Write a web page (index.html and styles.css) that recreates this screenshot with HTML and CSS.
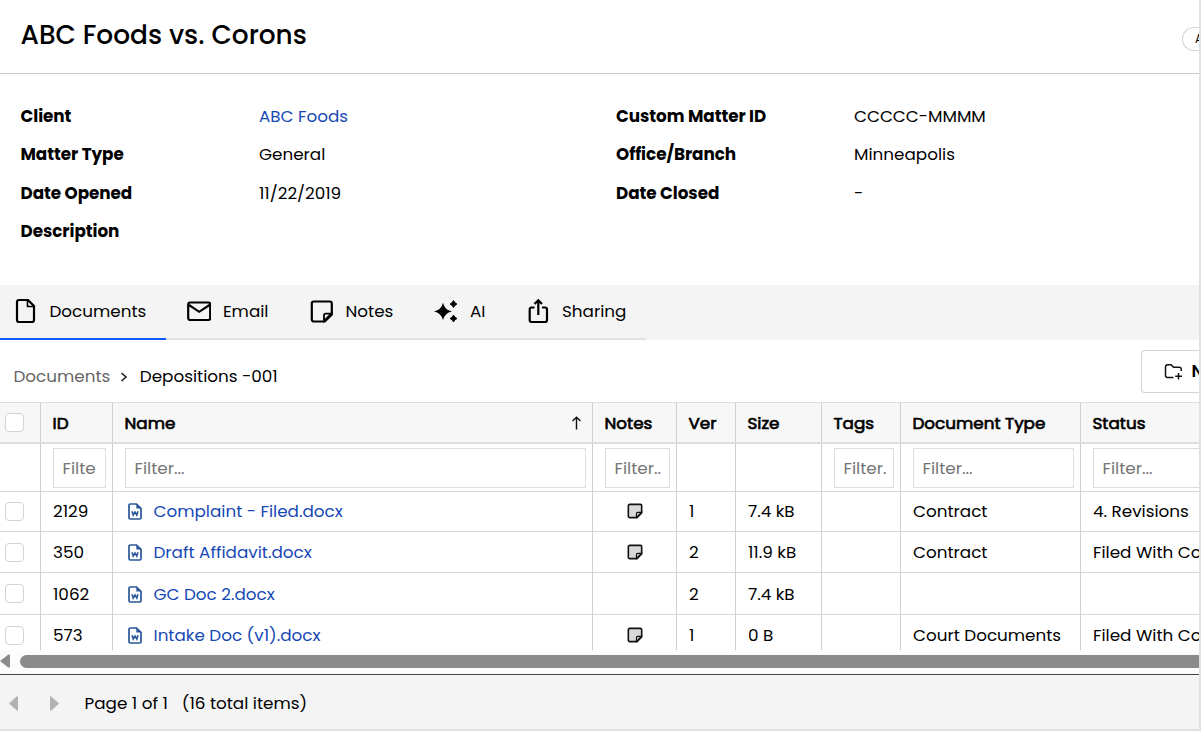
FILE: index.html
```html
<!DOCTYPE html>
<html lang="en">
<head>
<meta charset="utf-8">
<title>ABC Foods vs. Corons</title>
<link rel="stylesheet" href="styles.css">
</head>
<body>
<svg class="defs" width="0" height="0">
  <symbol id="word" viewBox="0 0 14 17"><path d="M2.200 1h6.300L13 5.300V14.800A1.200 1.200 0 0 1 11.800 16H2.200A1.200 1.200 0 0 1 1 14.800V2.200A1.200 1.200 0 0 1 2.200 1Z" fill="#fff" stroke="#2b579a" stroke-width="1.700"/><path d="M8.300 1v4.600H13Z" fill="#2b579a"/><path d="M4 8.200l1.200 3.800L7 9l1.800 3 1.200-3.800" fill="none" stroke="#2b579a" stroke-width="1.600"/></symbol>
  <symbol id="note" viewBox="0 0 24 24"><path d="M4 2H20A2 2 0 0 1 22 4V15L15 22H4A2 2 0 0 1 2 20V4A2 2 0 0 1 4 2Z"/><path d="M14.200 21.500V16A1.800 1.800 0 0 1 16 14.200H21.500L14.200 21.500Z" class="fold"/></symbol>
</svg>
<div class="app">
  <header class="top"><h1>ABC Foods vs. Corons</h1><span class="chip">A</span></header>
  <section class="info">
    <b>Client</b><a>ABC Foods</a><b>Custom Matter ID</b><span>CCCCC-MMMM</span>
    <b>Matter Type</b><span>General</span><b>Office/Branch</b><span>Minneapolis</span>
    <b>Date Opened</b><span>11/22/2019</span><b>Date Closed</b><span>-</span>
    <b>Description</b>
  </section>
  <nav class="tabs">
    <div class="tab t1"><svg viewBox="0 0 24 26"><path d="M5 2H14L20 8V22A2 2 0 0 1 18 24H5A2 2 0 0 1 3 22V4A2 2 0 0 1 5 2Z"/><path d="M13.500 2.500V8.500H19.500" stroke-width="1.600"/></svg><span>Documents</span></div>
    <div class="tab t2"><svg viewBox="0.500 0 24 26"><rect x="1.700" y="4.500" width="22" height="17.500" rx="2"/><path d="M2.500 7L12.700 13.800 23 7"/></svg><span>Email</span></div>
    <div class="tab t3"><svg viewBox="0.200 -1.500 24 26"><use href="#note" width="24" height="24"/></svg><span>Notes</span></div>
    <div class="tab t4"><svg viewBox="0 0 24 26"><g fill="#000" stroke="none"><path d="M9 4.800Q10.700 12 17.800 13.400 10.700 14.900 9 22 7.300 14.900 0 13.400 7.300 12 9 4.800Z"/><path d="M19.500 2.500Q20.600 5 23 6 20.600 7 19.500 9.500 18.400 7 16 6 18.400 5 19.500 2.500ZM19.500 17Q20.600 19.500 23 20.500 20.600 21.500 19.500 24 18.400 21.500 16 20.500 18.400 19.500 19.500 17Z" stroke="#000" stroke-width=".8"/></g></svg><span>AI</span></div>
    <div class="tab t5"><svg viewBox="0 0 24 26"><path d="M8.500 9.500H5.500A2 2 0 0 0 3.700 11.500V22A2 2 0 0 0 5.500 24H19A2 2 0 0 0 21 22V11.500A2 2 0 0 0 19 9.500H16M12.300 17V2.500M8.500 6L12.300 2.200 16 6"/></svg><span>Sharing</span></div>
  </nav>
  <div class="bar">
    <div class="crumbs"><span class="c1">Documents</span><svg width="8" height="10" viewBox="0 0 8 10"><path d="M1.500 1L6 5 1.500 9" fill="none" stroke="#222" stroke-width="1.600"/></svg><span>Depositions -001</span></div>
    <div class="newbtn"><svg width="20" height="18" viewBox="0 0 20 18"><path d="M9.500 14.500H3.500A2 2 0 0 1 1.500 12.500V3.800A2 2 0 0 1 3.500 1.800H7L9.500 4.300H15.500A1.700 1.700 0 0 1 17.200 6V8M14.500 10V16.500M11.200 13.300H18" fill="none" stroke="#111" stroke-width="1.500"/></svg><b>New</b></div>
  </div>
  <div class="grid">
    <div class="row head"><div><i class="cb"></i></div><div>ID</div><div class="nm"><span>Name</span><svg width="11" height="14" viewBox="0 0 11 14"><path d="M5.500 13.500V1.500M1.500 5L5.500 1.200 9.500 5" fill="none" stroke="#111" stroke-width="1.400"/></svg></div><div>Notes</div><div>Ver</div><div>Size</div><div>Tags</div><div>Document Type</div><div>Status</div></div>
    <div class="row filter"><div></div><div><p>Filte</p></div><div><p>Filter...</p></div><div><p>Filter..</p></div><div></div><div></div><div><p>Filter.</p></div><div><p>Filter...</p></div><div><p>Filter...</p></div></div>
    <div class="row r1"><div><i class="cb"></i></div><div>2129</div><div class="doc"><svg><use href="#word"/></svg><a>Complaint - Filed.docx</a></div><div class="n"><svg><use href="#note"/></svg></div><div>1</div><div>7.4 kB</div><div></div><div>Contract</div><div>4. Revisions</div></div>
    <div class="row r2"><div><i class="cb"></i></div><div>350</div><div class="doc"><svg><use href="#word"/></svg><a>Draft Affidavit.docx</a></div><div class="n"><svg><use href="#note"/></svg></div><div>2</div><div>11.9 kB</div><div></div><div>Contract</div><div>Filed With Court</div></div>
    <div class="row r3"><div><i class="cb"></i></div><div>1062</div><div class="doc"><svg><use href="#word"/></svg><a>GC Doc 2.docx</a></div><div></div><div>2</div><div>7.4 kB</div><div></div><div></div><div></div></div>
    <div class="row r4"><div><i class="cb"></i></div><div>573</div><div class="doc"><svg><use href="#word"/></svg><a>Intake Doc (v1).docx</a></div><div class="n"><svg><use href="#note"/></svg></div><div>1</div><div>0 B</div><div></div><div>Court Documents</div><div>Filed With Court</div></div>
  </div>
  <div class="scroll"><svg width="10" height="14" viewBox="0 0 10 14"><path d="M0 7L8 .8Q10 0 10 1.500V12.500Q10 14 8 13.200Z" fill="#8b8b8b"/></svg><i></i></div>
  <footer><svg width="9" height="15" viewBox="0 0 9 15"><path d="M0 7.500L8 .3Q9 0 9 1V14Q9 15 8 14.700Z" fill="#b2b2b2"/></svg><svg width="9" height="15" viewBox="0 0 9 15"><path d="M9 7.500L1 .3Q0 0 0 1V14Q0 15 1 14.700Z" fill="#b2b2b2"/></svg><span>Page 1 of 1</span><span class="tot">(16 total items)</span></footer>
</div>
</body>
</html>
```
FILE: styles.css
```css
*{box-sizing:border-box}
body{margin:0;font:400 16.8px/25px Poppins,Inter,sans-serif;color:#000;background:#fff;overflow:hidden}
.defs{display:block}
.app{width:1201px;height:731px;border-right:2px solid #dee2e6;border-bottom:2px solid #dee2e6;overflow:hidden;white-space:nowrap}
a{color:#1648b5}

.top{height:74px;border-bottom:1px solid #c8c8c8;display:flex;justify-content:space-between;padding:15px 0 0 20.5px;overflow:hidden}
h1{margin:0;font-weight:500;font-size:26.4px;line-height:40px}
.chip{width:17px;height:24px;margin-top:12px;border:1px solid #ced4da;border-right:0;border-radius:12px 0 0 12px;padding-left:12px;font-size:12px;line-height:22px;overflow:hidden}
.info{height:211px;padding:23px 0 0 20.5px;display:grid;grid-template-columns:238.5px 357px 238px 1fr;grid-auto-rows:38.400px;line-height:39px;align-content:start}
.info b{font-weight:700;letter-spacing:-.05px}
.tabs{height:55px;background:#f4f4f4;display:flex}
.tab{display:flex;gap:12px;padding:13px 0 0 21px;border-bottom:2px solid #dee2e6;line-height:27px}
.tab svg{width:24px;height:26px;flex:none;fill:none;stroke:#000;stroke-width:2.200}
.t1{width:166px;padding-left:14px;gap:11.5px;border-color:#0d5bff}
.t2{width:123px}
.t3{width:124px;gap:11.5px}
.t4{width:92px}
.t5{width:141px}
.fold{stroke-width:1.800}
.bar{height:62px;display:flex;justify-content:space-between}
.crumbs{display:flex;align-items:center;padding:11px 0 0 13.5px}
.crumbs svg{margin:0 11.5px 0 10px}
.c1{color:#666}
.newbtn{width:58px;height:43px;margin-top:10px;border:1px solid #ced4da;border-right:0;border-radius:4px 0 0 4px;display:flex;align-items:center;gap:8px;padding-left:21.5px;overflow:hidden}
.newbtn svg{flex:none}
.newbtn b{font-weight:600}
.grid{height:248px;overflow:hidden;border-top:1px solid #dedede}
.row{display:grid;grid-template-columns:41px 72px 480px 84px 59px 86px 79px 180px 130px;border-bottom:1px solid #d6d6d6}
.row>div{border-right:1px solid #d0d0d0;padding:0 6px 0 12px;display:flex;align-items:center;overflow:hidden}
.row>div:first-child{padding-left:5px}
.head{height:41px;background:#f7f7f7;border-bottom:2px solid #dedede;-webkit-text-stroke:.7px #000}
.head>div:not(:first-child){padding:2px 6px 0 11.5px}
.nm{justify-content:space-between}
.nm svg{margin:-2px 4px 0 0}
.filter{height:48px}
.filter p{margin:0;width:100%;height:40px;border:1px solid #dedede;padding:0 8.5px;line-height:39px;color:#757575;overflow:hidden}
.cb{width:19px;height:19px;border:1px solid #ced4da;border-radius:4px;background:#fff}
.r1{height:40px}
.r2{height:41px}
.r3{height:42px}
.r3>div:not(:first-child){padding-top:1px}
.r4{height:42px}
.doc svg{width:14px;height:17px;margin:1px 11.5px 0 3px;flex:none}
.r1 .doc svg,.r4 .doc svg{margin-top:0}
.row>.n{justify-content:center;padding:0}
.row.r1>.n,.row.r4>.n{padding-bottom:1px}
.n svg{width:16px;height:16px;fill:#d9d9d9;stroke:#111;stroke-width:2.400}
.n .fold{fill:#fff}
.scroll{height:25px;background:#fcfcfc;border-bottom:1px solid #444;display:flex;align-items:center;gap:10px;padding-bottom:2px}
.scroll i{flex:1;height:13px;background:#8b8b8b;border-radius:7px 0 0 7px}
footer{height:54px;background:#f4f4f4;display:flex;align-items:center;padding:3px 0 0 9px}
footer svg+svg{margin:0 25.5px 0 32px}
.tot{margin-left:14px}
```
